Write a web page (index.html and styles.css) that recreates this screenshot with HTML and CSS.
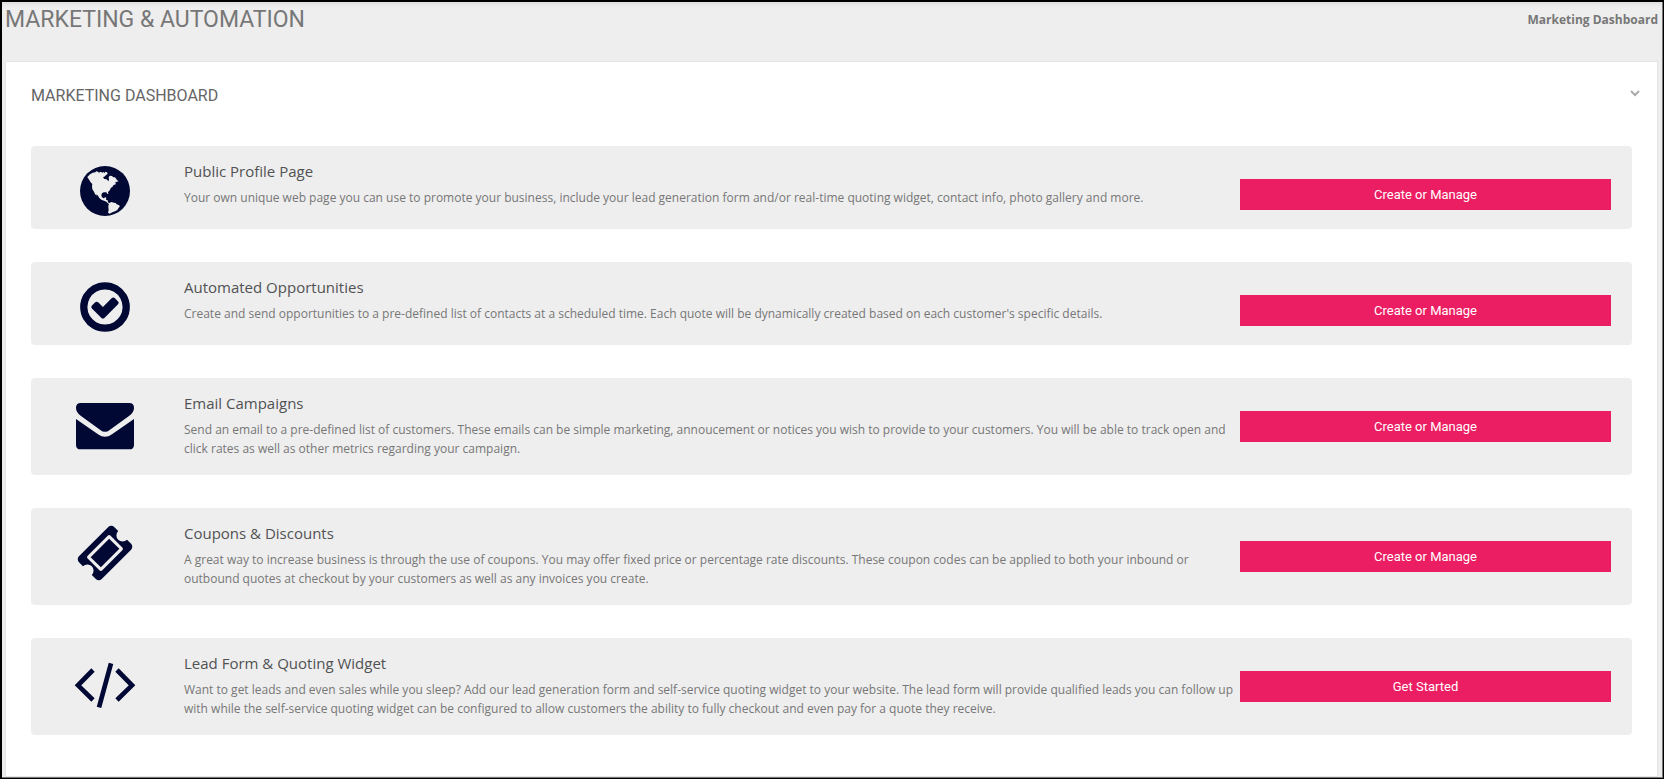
FILE: index.html
```
<!DOCTYPE html>
<html lang="en">
<head>
    <meta charset="UTF-8">
    <meta name="viewport" content="width=device-width, initial-scale=1.0">
    <title>Marketing &amp; Automation</title>
    <link rel="stylesheet" href="styles.css">
</head>
<body>
    <div class="page">
        <header class="page-header">
            <h1>MARKETING &amp; AUTOMATION</h1>
            <strong class="breadcrumb">Marketing Dashboard</strong>
        </header>

        <main class="panel">
            <div class="panel-heading">
                <h2>MARKETING DASHBOARD</h2>
                <button type="button" class="collapse" aria-label="Collapse panel">
                    <svg viewBox="0 0 10 8"><path d="M1 2l4 4 4-4"/></svg>
                </button>
            </div>

            <section class="card">
                <svg class="icon" viewBox="48 63 174 174">
                    <circle cx="135" cy="150" r="75"/>
                    <path class="land" d="M82 108l8-8 8-5 8-1 3-3 5 1 3 3 5-3 5 3 3-2 4 3 2-4 5 2 2 5-5 3-3 4-6 3 4 5 7 1 5 6 2-5-1-7 3-5 7 1 4 4 5 0 6 8 5 4-8 2-3 3 4 3-8 3-4 6-5 3-2 6-6 6 1 6-3 0-3-5-8 0-5 3-2 6 2 6 5 3 5-3 3 1-1 6 5 2 1 6 4 3 4 1-1 2-6-2-6-6-7-3-8-3-6-5-5-8-4-3 1 5-5-6-3-7-5-7-1-9 1-7-4-4-2-3z"/>
                    <path class="land" d="M148 186l6-3 8 2 5 1 3 4 8 3 1 4-4 5-3 5-7 4-8 3-8 4-5-3 2-8-1-8 0-5z"/>
                </svg>
                <div class="card-text">
                    <h3>Public Profile Page</h3>
                    <p>Your own unique web page you can use to promote your business, include your lead generation form and/or real-time quoting widget, contact info, photo gallery and more.</p>
                </div>
                <button type="button" class="btn">Create or Manage</button>
            </section>

            <section class="card">
                <svg class="icon" viewBox="0 0 1792 1792">
                    <path d="M1299 813l-422 422q-19 19-45 19t-45-19l-294-294q-19-19-19-45t19-45l102-102q19-19 45-19t45 19l147 147 275-275q19-19 45-19t45 19l102 102q19 19 19 45t-19 45zm141 83q0-148-73-273t-198-198-273-73-273 73-198 198-73 273 73 273 198 198 273 73 273-73 198-198 73-273zm224 0q0 209-103 385.500t-279.500 279.500-385.500 103-385.500-103-279.500-279.500-103-385.500 103-385.500 279.500-279.500 385.500-103 385.500 103 279.500 279.500 103 385.500z"/>
                </svg>
                <div class="card-text">
                    <h3>Automated Opportunities</h3>
                    <p>Create and send opportunities to a pre-defined list of contacts at a scheduled time. Each quote will be dynamically created based on each customer's specific details.</p>
                </div>
                <button type="button" class="btn">Create or Manage</button>
            </section>

            <section class="card">
                <svg class="icon" viewBox="48 42 174 174">
                    <path d="M62 69H208Q222 69 222 84Q222 97 208 107L150 149Q135 162 120 149L62 107Q48 97 48 84Q48 69 62 69z"/>
                    <path d="M48 117L114 163Q135 178 156 163L222 117V194Q222 208 208 208H62Q48 208 48 194z"/>
                </svg>
                <div class="card-text">
                    <h3>Email Campaigns</h3>
                    <p>Send an email to a pre-defined list of customers. These emails can be simple marketing, annoucement or notices you wish to provide to your customers. You will be able to track open and click rates as well as other metrics regarding your campaign.</p>
                </div>
                <button type="button" class="btn">Create or Manage</button>
            </section>

            <section class="card">
                <svg class="icon" viewBox="0 0 1792 1792">
                    <path d="M1024 452l316 316-572 572-316-316zm-211 979l618-618q19-19 19-45t-19-45l-362-362q-18-18-45-18t-45 18l-618 618q-19 19-19 45t19 45l362 362q18 18 45 18t45-18zm889-637l-907 908q-37 37-90.500 37t-90.500-37l-126-126q56-56 56-136t-56-136-136-56-136 56l-125-126q-37-37-37-90.500t37-90.500l907-906q37-37 90.500-37t90.500 37l125 125q-56 56-56 136t56 136 136 56 136-56l126 125q37 37 37 90.500t-37 90.500z"/>
                </svg>
                <div class="card-text">
                    <h3>Coupons &amp; Discounts</h3>
                    <p>A great way to increase business is through the use of coupons. You may offer fixed price or percentage rate discounts. These coupon codes can be applied to both your inbound or outbound quotes at checkout by your customers as well as any invoices you create.</p>
                </div>
                <button type="button" class="btn">Create or Manage</button>
            </section>

            <section class="card">
                <svg class="icon" viewBox="48 57 174 174">
                    <path class="stroke" d="M99 105L54 151L99 195M171 105L216 151L171 195M153 85L117 217"/>
                </svg>
                <div class="card-text">
                    <h3>Lead Form &amp; Quoting Widget</h3>
                    <p>Want to get leads and even sales while you sleep? Add our lead generation form and self-service quoting widget to your website. The lead form will provide qualified leads you can follow up with while the self-service quoting widget can be configured to allow customers the ability to fully checkout and even pay for a quote they receive.</p>
                </div>
                <button type="button" class="btn">Get Started</button>
            </section>
        </main>
    </div>
</body>
</html>
```
FILE: styles.css
```
* {
    box-sizing: border-box;
}
body {
    margin: 0;
    min-height: 100vh;
    display: flex;
    border: 1px solid #000;
    border-width: 2px 1px 1px 2px;
    background-color: #eee;
    font-family: 'Open Sans', sans-serif;
    font-size: 12px;
    line-height: 19px;
    color: #777;
}
h1, h2, h3, p {
    margin: 0;
    font-weight: 400;
}
.page {
    flex: 1;
    min-width: 0;
    display: flex;
    flex-direction: column;
    padding: 0 4px 0 3px;
    border-right: 1px solid #777;
    border-bottom: 1px solid #777;
    box-shadow: inset 0 4px 4px -2px #ddd;
}
.page-header {
    display: flex;
    justify-content: space-between;
    align-items: center;
    height: 35px;
    margin-bottom: 24px;
}
h1 {
    font-family: Roboto, sans-serif;
    font-size: 23px;
    line-height: 35px;
}
.breadcrumb {
    font-weight: 700;
}
.panel {
    flex: 1;
    padding: 0 25px 40px;
    background-color: #fff;
    border: 1px solid #e5e5e5;
}
.panel-heading {
    display: flex;
    justify-content: space-between;
    align-items: center;
    height: 66px;
    margin-bottom: 18px;
}
h2 {
    font-family: Roboto, sans-serif;
    font-size: 16px;
    color: #666;
}
.collapse {
    padding: 0 0 4px;
    border: 0;
    margin-right: -8px;
    background: none;
    cursor: pointer;
}
.collapse svg {
    display: block;
    width: 10px;
    height: 8px;
    fill: none;
    stroke: #aaa;
    stroke-width: 2;
}
.card {
    display: grid;
    grid-template-columns: 148px minmax(0, 1fr) 371px;
    align-items: start;
    min-height: 83px;
    margin-bottom: 33px;
    padding: 16px 21px 0 0;
    background-color: #eee;
    border-radius: 4px;
}
.card:last-child {
    margin-bottom: 0;
}
.icon {
    width: 58px;
    height: 58px;
    margin-left: 45px;
    overflow: visible;
    fill: #000833;
}
.icon .land {
    fill: #eee;
}
.icon .stroke {
    fill: none;
    stroke: #000833;
    stroke-width: 14;
}
.card-text {
    padding: 0 5px 17px;
}
h3 {
    margin-bottom: 8px;
    font-size: 15px;
    line-height: 18px;
    color: #515253;
}
.btn {
    height: 31px;
    margin-top: 17px;
    padding: 0 12px;
    border: 0;
    background-color: #ec1e63;
    color: #fff;
    font-family: Roboto, sans-serif;
    font-size: 13px;
    cursor: pointer;
}
.btn:hover {
    background-color: #d81557;
}
```
